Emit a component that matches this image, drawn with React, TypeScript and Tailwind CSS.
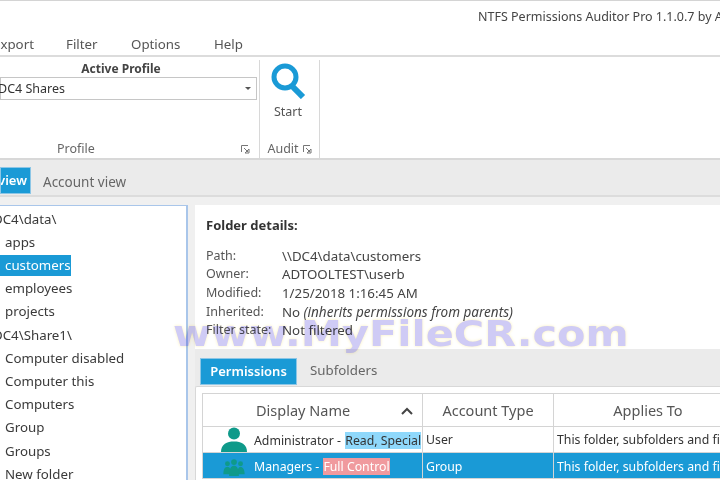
import React from "react";

const treeItems = [
  { label: "DC4\\data\\", root: true },
  { label: "apps" },
  { label: "customers", active: true },
  { label: "employees" },
  { label: "projects" },
  { label: "DC4\\Share1\\", root: true },
  { label: "Computer disabled" },
  { label: "Computer this" },
  { label: "Computers" },
  { label: "Group" },
  { label: "Groups" },
  { label: "New folder" },
];

const details = [
  ["Path:", "\\\\DC4\\data\\customers"],
  ["Owner:", "ADTOOLTEST\\userb"],
  ["Modified:", "1/25/2018 1:16:45 AM"],
];

const DialogLauncher = () => (
  <svg width="9" height="9" viewBox="0 0 9 9" className="text-[#777]">
    <path d="M0.5 7V0.5H7" fill="none" stroke="currentColor" />
    <path d="M3 3L7 7M8 4V8H4Z" fill="none" stroke="currentColor" />
  </svg>
);

const UserIcon = () => (
  <svg width="26" height="26" viewBox="0 0 26 26" className="text-[#0f9a8a]">
    <circle cx="13" cy="7.5" r="6" fill="currentColor" />
    <path d="M0 26C0 18 6 15.500 13 15.500S26 18 26 26Z" fill="currentColor" />
  </svg>
);

const GroupIcon = () => (
  <svg width="26" height="18" viewBox="0 0 26 22" className="text-[#0f9a8a]">
    <circle cx="5" cy="7" r="3" fill="currentColor" />
    <circle cx="21" cy="7" r="3" fill="currentColor" />
    <path d="M0 20C0 13 2 11 5 11S9 13 9 20Z" fill="currentColor" />
    <path d="M17 20C17 13 19 11 21 11S26 13 26 20Z" fill="currentColor" />
    <circle cx="13" cy="5" r="3.500" fill="currentColor" />
    <path d="M7 22C7 12 10 9.500 13 9.500S19 12 19 22Z" fill="currentColor" />
  </svg>
);

const App = () => {
  return (
    <div className="relative flex h-[480px] w-[720px] flex-col overflow-hidden border-t border-[#d4d4d4] bg-white font-['Noto_Sans',sans-serif] text-[13.300px] text-[#333]">

      {/* TITLE BAR */}
      <div className="flex h-[29px] shrink-0 items-end justify-end overflow-hidden">
        <span className="-mr-[60px] w-[302px] whitespace-nowrap pb-[3px] text-[12.500px] text-[#444]">
          NTFS Permissions Auditor Pro 1.1.0.7 by ADToolTest
        </span>
      </div>

      {/* MENU */}
      <div className="flex h-[27px] shrink-0 items-center border-b-2 border-[#dcdcdc] pt-[4px] text-[#555]">
        <span className="-ml-[7px] w-[73px]">Export</span>
        <span className="w-[65px]">Filter</span>
        <span className="w-[83px]">Options</span>
        <span>Help</span>
      </div>

      {/* RIBBON */}
      <div className="flex h-[103px] shrink-0 border-b-2 border-[#d8d8d8] pt-[3px]">
        <div className="flex w-[260px] flex-col border-r border-[#d8d8d8] pb-[1px]">
          <div className="pr-[17px] text-center text-[12px] font-bold leading-[17px] text-[#444]">
            Active Profile
          </div>
          <div className="flex h-[23px] w-[257px] items-center justify-between border border-[#c6c6c6] pl-[1px] pr-[5px] text-[12.500px]">
            <span className="-ml-[4px] pt-[1px]">DC4 Shares</span>
            <span className="h-0 w-0 border-x-[3px] border-t-[3px] border-x-transparent border-t-[#555]" />
          </div>
          <div className="mt-auto flex items-center pr-[9px] text-[12.500px] leading-[16px] text-[#666]">
            <span className="ml-[57px]">Profile</span>
            <span className="ml-auto">
              <DialogLauncher />
            </span>
          </div>
        </div>
        <div className="flex w-[60px] flex-col items-center border-r border-[#d8d8d8] pb-[1px]">
          <svg width="36" height="36" viewBox="0 0 36 36" className="mr-[3px] mt-[3px] text-[#1a9ad6]">
            <circle cx="15" cy="14" r="11" fill="none" stroke="currentColor" strokeWidth="5" />
            <path d="M22 23L33 34" stroke="currentColor" strokeWidth="6" />
          </svg>
          <span className="mt-[4px] pr-[3px] text-[12.500px] leading-[17px] text-[#555]">Start</span>
          <div className="mt-auto flex items-center gap-[4px] text-[12.500px] leading-[16px] text-[#666]">
            <span>Audit</span>
            <DialogLauncher />
          </div>
        </div>
      </div>

      {/* VIEW TABS */}
      <div className="flex h-[37px] shrink-0 items-end border-b-2 border-[#dcdcdc] bg-[#ebebeb] pb-[1px] text-[13.500px]">
        <div className="flex h-[27px] w-[31px] items-center justify-end overflow-hidden border border-[#8cc6e6] bg-[#1a9ad6] pr-[3px] text-[13px] font-semibold text-white">
          <span>view</span>
        </div>
        <span className="ml-[12px] pb-[2px] text-[#666]">Account view</span>
      </div>

      {/* BODY */}
      <div className="flex min-h-0 flex-1 gap-[7px] bg-[#f0f0f0] pt-[8px]">

        {/* TREE */}
        <div className="w-[188px] shrink-0 border-r-2 border-t border-[#a9c6ea] bg-white pt-[2px] text-[#3a3a3a]">
          {treeItems.map((item) => (
            <div key={item.label} className="flex h-[23.200px] items-center">
              {item.root ? (
                <span className="-ml-[7px]">{item.label}</span>
              ) : (
                <span
                  className={
                    item.active
                      ? "flex h-[21px] items-center bg-[#1a9ad6] pl-[5px] text-white"
                      : "pl-[5px]"
                  }
                >
                  {item.label}
                </span>
              )}
            </div>
          ))}
        </div>

        {/* DETAILS */}
        <div className="flex min-w-0 flex-1 flex-col">
          <div className="h-[144px] shrink-0 bg-white pl-[11px] pt-[11px]">
            <div className="text-[13px] font-bold text-[#333]">Folder details:</div>
            <div className="mt-[11px] text-[13.300px] leading-[18.700px]">
              {details.map(([label, value]) => (
                <div key={label} className="flex">
                  <span className="w-[76px] text-[12.500px] text-[#555]">{label}</span>
                  <span className="text-[#444]">{value}</span>
                </div>
              ))}
              <div className="flex">
                <span className="w-[76px] text-[12.500px] text-[#555]">Inherited:</span>
                <span className="text-[#444]">
                  No <i className="text-[13.500px]">(inherits permissions from parents)</i>
                </span>
              </div>
              <div className="flex">
                <span className="w-[76px] text-[12.500px] text-[#555]">Filter state:</span>
                <span className="text-[#444]">Not filtered</span>
              </div>
            </div>
          </div>

          {/* PERMISSION TABS */}
          <div className="flex h-[37px] shrink-0 items-end bg-[#ebebeb] pb-[1px] pl-[5px]">
            <div className="flex h-[27px] w-[97px] items-center justify-center border border-[#8cc6e6] bg-[#1a9ad6] text-[13px] font-semibold text-white">
              Permissions
            </div>
            <span className="ml-[13px] pb-[4px] text-[#666]">Subfolders</span>
          </div>

          {/* TABLE */}
          <div className="flex-1 rounded-tl-[2px] border-l border-t border-[#d8d8d8] bg-white pl-[6px] pt-[6px]">
            <div className="w-[530px] text-[12.300px]">
              <div className="flex h-[34px] border-y border-l border-[#d4d4d4] text-[14.500px] text-[#555]">
                <div className="flex w-[220px] items-center gap-[51px] border-r border-[#d4d4d4] pl-[53px] pt-[1px]">
                  <span>Display Name</span>
                  <svg width="12" height="8" viewBox="0 0 12 8" className="text-[#444]">
                    <path d="M1 7L6 2L11 7" fill="none" stroke="currentColor" strokeWidth="2" />
                  </svg>
                </div>
                <div className="flex w-[131px] items-center justify-center border-r border-[#d4d4d4] pt-[1px]">
                  Account Type
                </div>
                <div className="flex flex-1 items-center justify-center pl-[10px] pt-[1px]">Applies To</div>
              </div>
              <div className="flex h-[26px] border-b border-l border-[#d4d4d4] text-[#333]">
                <div className="flex w-[220px] items-end border-r border-[#d4d4d4] pl-[18px]">
                  <UserIcon />
                  <span className="mb-[2px] ml-[7px] whitespace-nowrap">
                    Administrator -{" "}
                    <span className="ml-[1px] bg-[#8fd8fb]">Read, Special</span>
                  </span>
                </div>
                <div className="flex w-[131px] items-center border-r border-[#d4d4d4] pl-[3px] pt-[2px]">User</div>
                <div className="flex flex-1 items-center overflow-hidden whitespace-nowrap pl-[3px] pt-[2px]">
                  This folder, subfolders and files
                </div>
              </div>
              <div className="flex h-[26px] border-b border-l border-[#d4d4d4] bg-[#1a9ad6] text-white">
                <div className="flex w-[220px] items-center border-r border-[#d4d4d4] pl-[18px] pt-[3px]">
                  <GroupIcon />
                  <span className="ml-[7px] whitespace-nowrap">
                    Managers - <span className="ml-[1px] bg-[#f09a9e]">Full Control</span>
                  </span>
                </div>
                <div className="flex w-[131px] items-center border-r border-[#d4d4d4] pl-[3px] pt-[3px]">Group</div>
                <div className="flex flex-1 items-center overflow-hidden whitespace-nowrap pl-[3px] pt-[3px]">
                  This folder, subfolders and files
                </div>
              </div>
            </div>
          </div>
        </div>
      </div>

      {/* WATERMARK */}
      <div className="pointer-events-none absolute left-[173px] top-[311px] origin-left scale-x-[1.15] whitespace-nowrap font-['DejaVu_Sans',sans-serif] text-[36px] font-bold leading-[44px] text-[#cfcbf5] mix-blend-multiply [text-shadow:0_0_3px_#f8eeb8]">
        www.MyFileCR.com
      </div>
    </div>
  );
};

export default App;
